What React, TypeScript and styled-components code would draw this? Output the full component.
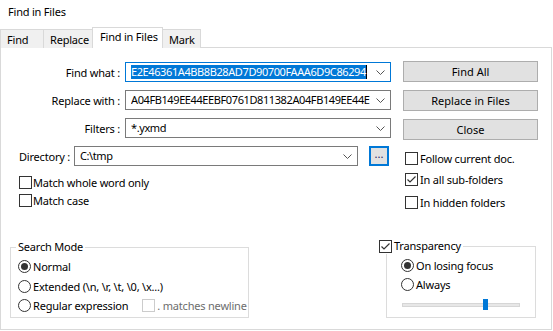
import React from 'react';
import styled, { createGlobalStyle } from 'styled-components';

const GlobalStyle = createGlobalStyle`
  html, body {
    margin: 0;
    padding: 0;
    background: #ffffff;
  }
  body {
    font-family: "Noto Sans", "Open Sans", sans-serif;
    font-size: 11px;
    letter-spacing: -0.2px;
    color: #000000;
  }
  * {
    box-sizing: border-box;
  }
`;

const Dialog = styled.div`
  width: 553px;
  height: 331px;
  display: flex;
  flex-direction: column;
`;

const TitleBar = styled.div`
  height: 27px;
  padding: 4px 0 0 8px;
  line-height: 16px;
`;

const TabStrip = styled.div`
  display: flex;
  align-items: flex-end;
  height: 21px;
  margin-bottom: -1px;
`;

const Tab = styled.div<{ $w: number; $active?: boolean }>`
  position: relative;
  z-index: ${(p) => (p.$active ? 1 : 0)};
  width: ${(p) => p.$w}px;
  height: ${(p) => (p.$active ? 21 : 19)}px;
  margin-left: -1px;
  padding: ${(p) => (p.$active ? '1px 0 0 7px' : '2px 0 0 6px')};
  line-height: 15px;
  background: ${(p) => (p.$active ? '#ffffff' : '#f0f0f0')};
  border: 1px solid #d9d9d9;
  border-bottom: none;
  white-space: nowrap;
  &:first-child {
    margin-left: 0;
  }
`;

const Panel = styled.div`
  height: 283px;
  margin-right: 1px;
  border: 1px solid #d9d9d9;
  display: flex;
  flex-direction: column;
  padding: 0 13px 11px 0;
`;

const TopSection = styled.div`
  display: flex;
  justify-content: space-between;
`;

const LeftCol = styled.div`
  width: 390px;
  padding-top: 14px;
  display: flex;
  flex-direction: column;
  gap: 8px;
`;

const FieldRow = styled.div<{ $indent?: number }>`
  display: flex;
  align-items: center;
  height: 20px;
  padding-left: ${(p) => p.$indent ?? 0}px;
`;

const FieldLabel = styled.label<{ $w: number; $right?: boolean }>`
  width: ${(p) => p.$w}px;
  margin-right: ${(p) => (p.$right ? 5 : 4)}px;
  text-align: ${(p) => (p.$right ? 'right' : 'left')};
  white-space: nowrap;
`;

const Combo = styled.div<{ $w: number; $focused?: boolean }>`
  width: ${(p) => p.$w}px;
  height: 20px;
  display: flex;
  align-items: center;
  padding-left: 5px;
  background: #ffffff;
  border: 1px solid ${(p) => (p.$focused ? '#0078d7' : '#7a7a7a')};
  overflow: hidden;
`;

const ComboText = styled.div`
  flex: 1;
  overflow: hidden;
  white-space: nowrap;
  line-height: 14px;
  letter-spacing: -0.4px;
`;

const Selected = styled.span`
  background: #0078d7;
  color: #ffffff;
  border-right: 1px solid #000000;
  padding-bottom: 1px;
`;

const Chevron = styled.span`
  width: 18px;
  display: flex;
  justify-content: center;
  align-items: center;
  padding-right: 2px;
`;

const BrowseButton = styled.button`
  width: 20px;
  height: 20px;
  margin-left: 11px;
  padding: 0 0 4px;
  background: #e1e1e1;
  border: 2px solid #0078d7;
  font: inherit;
  line-height: 12px;
  color: #1b1b5e;
`;

const CheckList = styled.div<{ $indent: number; $top: number }>`
  display: flex;
  flex-direction: column;
  gap: 2px;
  margin-top: ${(p) => p.$top}px;
  padding-left: ${(p) => p.$indent}px;
`;

const CheckRow = styled.div<{ $mt?: number; $gap?: number; $disabled?: boolean }>`
  display: flex;
  align-items: center;
  height: 16px;
  gap: ${(p) => p.$gap ?? 2}px;
  margin-top: ${(p) => p.$mt ?? 0}px;
  white-space: nowrap;
  color: ${(p) => (p.$disabled ? '#6d6d6d' : '#000000')};
`;

const Box = styled.span<{ $disabled?: boolean }>`
  width: 13px;
  height: 13px;
  flex: none;
  display: inline-flex;
  align-items: center;
  justify-content: center;
  background: #ffffff;
  border: 1px solid ${(p) => (p.$disabled ? '#cccccc' : '#333333')};
`;

const Round = styled.span`
  width: 13px;
  height: 13px;
  flex: none;
  display: inline-flex;
  align-items: center;
  justify-content: center;
  border-radius: 50%;
  background: #ffffff;
  border: 1px solid #333333;
`;

const Dot = styled.span`
  width: 7px;
  height: 7px;
  border-radius: 50%;
  background: #333333;
`;

const RightCol = styled.div`
  width: 135px;
  padding-top: 13px;
  display: flex;
  flex-direction: column;
`;

const ButtonStack = styled.div`
  display: flex;
  flex-direction: column;
  gap: 8px;
`;

const PushButton = styled.button`
  height: 21px;
  background: #e1e1e1;
  border: 1px solid #adadad;
  font: inherit;
  color: #000000;
  padding: 0;
`;

const BottomSection = styled.div`
  margin-top: auto;
  display: flex;
  justify-content: space-between;
  align-items: flex-end;
  padding-left: 9px;
`;

const Group = styled.fieldset<{ $w: number; $h: number; $pad: number; $mr?: number }>`
  width: ${(p) => p.$w}px;
  height: ${(p) => p.$h}px;
  margin: 0 ${(p) => p.$mr ?? 0}px 0 0;
  padding: 1px 0 0 ${(p) => p.$pad}px;
  border: 1px solid #dcdcdc;
  min-width: 0;
`;

const Legend = styled.legend<{ $shift: number }>`
  margin-left: ${(p) => p.$shift}px;
  padding: 0 2px;
  line-height: 16px;
  display: flex;
  align-items: center;
  gap: 2px;
`;

const RadioRow = styled.div<{ $h?: number }>`
  display: flex;
  align-items: center;
  gap: 2px;
  height: ${(p) => p.$h ?? 20}px;
  white-space: nowrap;
`;

const Spacer = styled.span`
  width: 10px;
`;

const SliderTrack = styled.div`
  position: relative;
  width: 118px;
  height: 4px;
  margin: 9px 0 0 1px;
  background: #e7e7e7;
  border: 1px solid #d6d6d6;
`;

const SliderThumb = styled.span`
  position: absolute;
  top: -5px;
  width: 5px;
  height: 11px;
  background: #0078d7;
`;

function ChevronIcon(): JSX.Element {
  return (
    <svg width='9' height='5' viewBox='0 0 9 5'>
      <polyline points='0.5,0.5 4.5,4.5 8.5,0.5' fill='none' stroke='#555' strokeWidth='1' />
    </svg>
  );
}

function Check({ checked, disabled }: { checked?: boolean; disabled?: boolean }): JSX.Element {
  return (
    <Box $disabled={disabled}>
      {checked && (
        <svg width='11' height='11' viewBox='0 0 11 11'>
          <polyline points='1.5,5.5 4,8 9.5,2.5' fill='none' stroke='#333' strokeWidth='1.2' />
        </svg>
      )}
    </Box>
  );
}

function Radio({ checked }: { checked?: boolean }): JSX.Element {
  return <Round>{checked && <Dot />}</Round>;
}

type FieldProps = {
  label: string;
  value: React.ReactNode;
};

function Field({ label, value }: FieldProps): JSX.Element {
  return (
    <FieldRow>
      <FieldLabel $w={119} $right>
        {label}
      </FieldLabel>
      <Combo $w={266} $focused={typeof value !== 'string'}>
        <ComboText>{value}</ComboText>
        <Chevron>
          <ChevronIcon />
        </Chevron>
      </Combo>
    </FieldRow>
  );
}

function App(): JSX.Element {
  const transparency = 69;

  return (
    <Dialog>
      <GlobalStyle />
      <TitleBar>Find in Files</TitleBar>
      <TabStrip>
        <Tab $w={44}>Find</Tab>
        <Tab $w={50}>Replace</Tab>
        <Tab $w={71} $active>
          Find in Files
        </Tab>
        <Tab $w={39}>Mark</Tab>
      </TabStrip>
      <Panel>
        <TopSection>
          <LeftCol>
            <Field
              label='Find what :'
              value={<Selected>E2E46361A4BB8B28AD7D90700FAAA6D9C86294</Selected>}
            />
            <Field label='Replace with :' value='A04FB149EE44EEBF0761D811382A04FB149EE44E' />
            <Field label='Filters :' value='*.yxmd' />
            <FieldRow $indent={18}>
              <FieldLabel $w={51}>Directory :</FieldLabel>
              <Combo $w={284}>
                <ComboText>C:\tmp</ComboText>
                <Chevron>
                  <ChevronIcon />
                </Chevron>
              </Combo>
              <BrowseButton>...</BrowseButton>
            </FieldRow>
            <CheckList $indent={18} $top={0}>
              <CheckRow $gap={1}>
                <Check />
                Match whole word only
              </CheckRow>
              <CheckRow $gap={1}>
                <Check />
                Match case
              </CheckRow>
            </CheckList>
          </LeftCol>
          <RightCol>
            <ButtonStack>
              <PushButton>Find All</PushButton>
              <PushButton>Replace in Files</PushButton>
              <PushButton>Close</PushButton>
            </ButtonStack>
            <CheckList $indent={2} $top={10}>
              <CheckRow>
                <Check />
                Follow current doc.
              </CheckRow>
              <CheckRow $mt={3}>
                <Check checked />
                In all sub-folders
              </CheckRow>
              <CheckRow $mt={5}>
                <Check />
                In hidden folders
              </CheckRow>
            </CheckList>
          </RightCol>
        </TopSection>
        <BottomSection>
          <Group $w={239} $h={79} $pad={7}>
            <Legend $shift={-2}>Search Mode</Legend>
            <RadioRow>
              <Radio checked />
              Normal
            </RadioRow>
            <RadioRow>
              <Radio />
              Extended (\n, \r, \t, \0, \x...)
            </RadioRow>
            <RadioRow $h={19}>
              <Radio />
              Regular expression
              <Spacer />
              <CheckRow $disabled>
                <Check disabled />. matches newline
              </CheckRow>
            </RadioRow>
          </Group>
          <Group $w={150} $h={80} $pad={14} $mr={2}>
            <Legend $shift={-24}>
              <Check checked />
              Transparency
            </Legend>
            <RadioRow>
              <Radio checked />
              On losing focus
            </RadioRow>
            <RadioRow $h={19}>
              <Radio />
              Always
            </RadioRow>
            <SliderTrack>
              <SliderThumb style={{ left: `${transparency}%` }} />
            </SliderTrack>
          </Group>
        </BottomSection>
      </Panel>
    </Dialog>
  );
}

export default App;
